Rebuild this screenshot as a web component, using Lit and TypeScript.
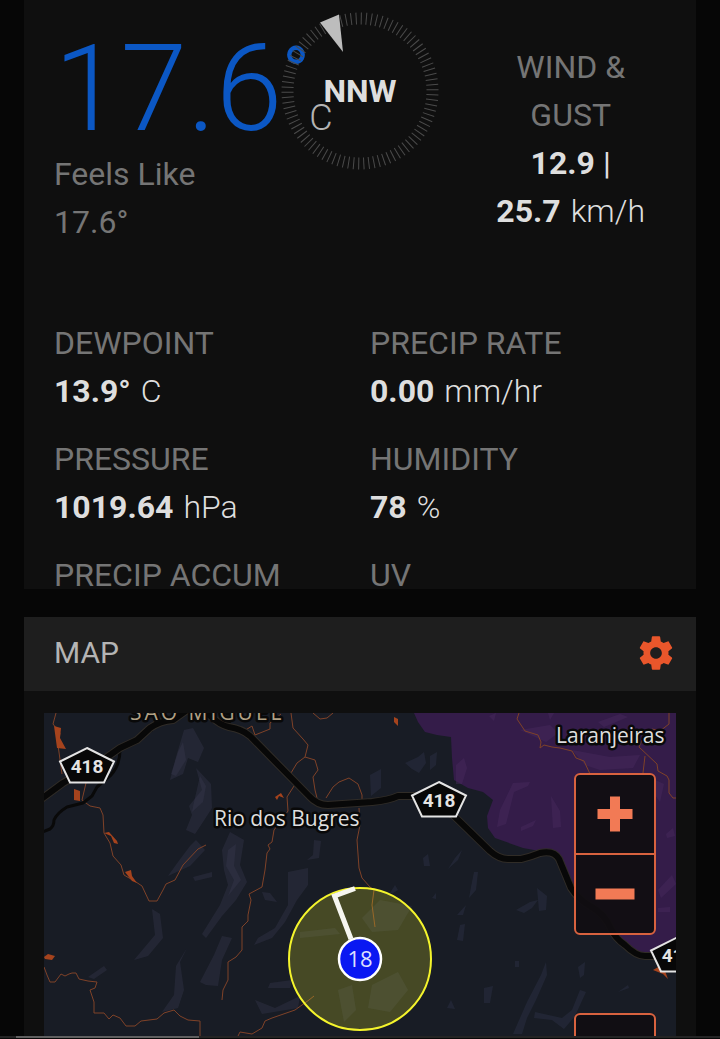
import { LitElement, html, svg, css } from "lit";
import { customElement, property } from "lit/decorators.js";

interface Reading {
  label: string;
  value?: string;
  unit?: string;
}

const READINGS: Reading[] = [
  { label: "DEWPOINT", value: "13.9°", unit: "C" },
  { label: "PRECIP RATE", value: "0.00", unit: "mm/hr" },
  { label: "PRESSURE", value: "1019.64", unit: "hPa" },
  { label: "HUMIDITY", value: "78", unit: "%" },
  { label: "PRECIP ACCUM" },
  { label: "UV" },
];

@customElement("wind-compass")
class WindCompass extends LitElement {
  @property() direction = "";

  static styles = css`
    :host {
      display: grid;
      place-items: center;
      align-content: start;
    }
    .dial,
    .direction {
      grid-area: 1 / 1;
    }
    .dial {
      display: block;
      width: 160px;
      height: 160px;
    }
    .direction {
      font-size: 32px;
      line-height: 48px;
      font-weight: 700;
      color: #dedede;
    }
  `;

  render() {
    const ticks = Array.from({ length: 90 }, (_, i) => i * 4 + 1);
    return html`
      <svg class="dial" viewBox="0 0 160 160" aria-hidden="true">
        ${ticks.map(
          (a) => svg`<line x1="80" y1="1.5" x2="80" y2="13.5" stroke="#4b4b4b" stroke-width="1" transform="rotate(${a} 80 80)"/>`
        )}
        <path d="M40 11.500L59 3.500L63 41Z" fill="#bdbdbd" stroke="#0f0f0f" stroke-width="1" paint-order="stroke" />
      </svg>
      <span class="direction">${this.direction}</span>
    `;
  }
}

@customElement("current-conditions")
class CurrentConditions extends LitElement {
  static styles = css`
    :host {
      display: block;
      background: #0f0f0f;
      padding: 0 20px;
      overflow: hidden;
      font-size: 32px;
      line-height: 48px;
    }
    .summary {
      display: grid;
      grid-template-columns: repeat(3, minmax(0, 1fr));
      height: 319px;
    }
    .temp {
      padding: 26px 10px 0;
      color: #757575;
    }
    .main {
      display: flex;
      align-items: baseline;
      white-space: nowrap;
      height: 124px;
      line-height: 126px;
      font-size: 120px;
      font-weight: 300;
      color: #0b57c4;
    }
    .degree {
      font-size: 72px;
      font-weight: 400;
      align-self: flex-start;
      line-height: 96px;
    }
    .scale {
      font-size: 36px;
      color: #b4b4b4;
    }
    .feels {
      width: 150px;
    }
    .compass {
      padding-top: 11px;
    }
    .wind {
      padding: 43px 20px 0;
      text-align: center;
    }
    .label {
      color: #757575;
    }
    .value {
      color: #dedede;
    }
    .unit {
      margin-left: 2px;
      font-weight: 300;
    }
    .together {
      white-space: nowrap;
    }
    .readings {
      display: grid;
      grid-template-columns: repeat(2, minmax(0, 1fr));
      grid-template-rows: 96px 96px 38px;
      row-gap: 20px;
      margin: 0;
    }
    .reading {
      padding: 0 10px;
    }
    dd {
      margin: 0;
    }
  `;

  render() {
    return html`
      <div class="summary">
        <div class="temp">
          <div class="main">17.6<span class="degree">°</span><span class="scale">C</span></div>
          <div class="feels">Feels Like 17.6°</div>
        </div>
        <wind-compass class="compass" direction="NNW"></wind-compass>
        <div class="wind">
          <div class="label">WIND &amp; GUST</div>
          <div class="value">
            <strong>12.9</strong> |
            <span class="together"><strong>25.7</strong> <span class="unit">km/h</span></span>
          </div>
        </div>
      </div>
      <dl class="readings">
        ${READINGS.map(
          (r) => html`<div class="reading">
            <dt class="label">${r.label}</dt>
            ${r.value ? html`<dd class="value"><strong>${r.value}</strong> <span class="unit">${r.unit}</span></dd>` : null}
          </div>`
        )}
      </dl>
    `;
  }
}

const HIGHWAY = [
  "M40 800L63 783L103 760L120 748L137 740L150 728Q160 721 173 720L190 708",
  "M200 708L213 718Q220 725 229 727Q242 729 250 736L309 796Q317 805 328 805L372 802Q390 800 398 796L415 796L453 815L490 851Q499 859 508 859L521 859Q530 857 540 853Q554 850 559 859L571 888Q578 899 590 906Q605 914 611 929Q615 938 625 945Q636 956 645 956L676 956",
];

const SIDE_ROADS = [
  "M40 833L50 829Q54 826 54 820Q57 813 67 807L83 803L92 796L97 787L111 775Q120 765 120 750L136 743L143 735L152 730",
  "M222 713L230 724",
];

const TRAILS = [
  "M56 713L53 724L60 733L58 745L62 774",
  "M86 783L82 800L90 806L100 808L103 815L104 833L110 843L113 856L121 865L124 875L136 882L142 886L149 901L157 901L163 890L166 884L175 880L183 865L198 849L206 845",
  "M244 731L252 726L255 735L270 729L270 723L281 714M291 713L293 728L303 739L308 745L305 757L297 763L291 773M305 757L315 760L318 770L313 777L315 790L317 798",
  "M313 713L320 719L327 718L333 713M326 798L333 787L339 782L349 778L358 784L362 795L362 800M294 786L287 797L288 811L280 822L274 830L272 842L268 845L270 849L267 853L265 870L262 887L249 894L251 900L248 915L248 921L242 927L242 950L236 957L228 962L228 980L223 990L222 1000",
  "M359 808L360 825L357 840L359 868L362 878L370 887L374 890L372 905L375 927",
  "M44 967L47 975L50 982L55 982L61 974L65 976L69 974L72 973L76 973L79 979L88 981L97 982L95 988L90 990L94 1002L94 1013L104 1013L109 1019L113 1015L120 1018L126 1026L135 1026L141 1021L157 1019L164 1013L174 1010L180 1016L188 1020L200 1021L200 1039",
  "M238 1036L240 1032L252 1034L262 1028L265 1021L272 1018L295 1010L309 1000L314 996",
  "M519 713L517 719L525 731L538 735L541 742L540 748L544 745L552 747L560 748L572 751L576 758L584 761L590 774M669 713L669 724L660 731L652 729L642 740L639 747L657 764L658 771L667 776L669 780L669 793L673 798L676 798M645 756L643 773",
];

const BUILT_UP = [
  "M54 726L61 728L60 738L66 749L57 748Z",
  "M74 789L80 791L80 801L74 800Z",
  "M104 833L109 832L117 841L118 844L114 843L111 836Z",
  "M125 872L131 870L132 876L137 883L132 881Z",
  "M44 957L48 954L55 956L52 960L45 959Z",
  "M275 797L281 793L284 798L279 796L277 800Z",
  "M394 717L398 719L398 726L394 722Z",
  "M653 970L660 966L665 971L668 979L663 974Z",
];

const RIDGES = [
  "M184 730L193 728L204 748L198 762L188 758L183 774L170 780L176 757Z",
  "M178 752L183 742L186 760L176 776L171 774Z",
  "M196 768L211 784L212 808L203 822L195 834L186 830L192 815L189 806L202 790Z",
  "M200 776L206 786L203 802L192 812L194 802Z",
  "M178 862L190 846L196 840L205 850L190 866L168 876Z",
  "M222 850L230 832L244 840L240 865L247 882L236 900L222 916L206 938L202 934L220 905L228 885L224 870Z",
  "M228 850L236 844L234 866L241 880L228 896L234 880L226 866Z",
  "M222 936L232 938L222 960L218 986L206 985L200 982L214 955Z",
  "M152 909L160 914L163 938L148 956L134 960L155 935Z",
  "M187 948L180 962L184 990L178 1008L162 1012L174 995L176 966Z",
  "M288 872L308 868L308 885L297 900L285 922L272 938L254 945L258 938L275 928L288 905Z",
  "M262 892L270 893L277 902L265 900Z",
  "M193 877L212 872L212 877L195 881Z",
  "M255 1000L275 1008L300 996L298 1008L262 1014Z",
  "M270 983L292 980L290 988L268 988Z",
  "M314 840L321 841L319 858L307 860L313 855Z",
  "M88 977L104 966L107 970L94 979Z",
];

const FACETS = [
  "M405 763L418 757L424 752L426 763L419 773L412 769Z",
  "M370 775L381 769L381 788L371 796Z",
  "M430 756L437 752L436 765L430 770Z",
  "M423 858L428 854L430 866L424 866Z",
  "M455 858L462 850L458 860L448 869Z",
  "M474 872L478 872L476 890L469 898L471 887Z",
  "M457 915L466 905L463 915Z",
  "M460 925L465 924L463 941L457 940Z",
  "M516 910L530 902L538 900L532 908L524 913Z",
  "M537 888L547 896L546 910L539 911Z",
  "M546 962L547 975L536 1000L527 1018L522 1034L513 1034L527 1002L541 975Z",
  "M535 1012L562 1018L572 1010L580 990L586 992L575 1016L564 1029L552 1020L534 1018Z",
  "M484 988L493 986L490 1003L484 1003Z",
  "M515 961L519 961L519 967L515 967Z",
  "M578 967L585 962L584 975L580 978Z",
  "M447 1008L451 1000L455 1009Z",
  "M390 893L395 885L398 890L393 893Z",
  "M432 898L436 893L436 899Z",
  "M618 992L628 985L629 988Z",
  "M362 918L380 900L412 906L398 930L372 932Z",
  "M300 932L335 928L340 934L300 938Z",
  "M338 990L352 985L356 1010L344 1022Z",
  "M372 985L398 972L408 990L390 1012L368 1008Z",
];

const PURPLE_FACETS = [
  "M456 765L464 758L467 768L462 784L456 784Z",
  "M500 810L513 783L530 782L528 786L514 792L506 824L497 827Z",
  "M521 827L536 820L533 826L521 831Z",
  "M551 796L560 811L561 827L553 828Z",
  "M520 730L550 725L558 733L546 742Z",
  "M572 750L610 757L640 755L633 768L600 770L585 765Z",
  "M655 780L664 784L660 802L655 795Z",
  "M489 716L496 713L494 721Z",
  "M548 713L554 713L550 720Z",
  "M598 722L620 714L628 717L604 727Z",
  "M666 834L673 828L675 836L667 838Z",
  "M658 890L672 875L676 884L661 898Z",
  "M658 908L670 907L670 912L658 912Z",
];

@customElement("station-map")
class StationMap extends LitElement {
  static styles = css`
    :host {
      display: block;
      position: relative;
      overflow: hidden;
      background: #181c25;
    }
    .canvas {
      display: block;
      width: 100%;
      height: 100%;
    }
    .outline {
      fill: none;
      stroke: #302c27;
      stroke-width: 8px;
      stroke-linejoin: round;
    }
    .highway {
      fill: none;
      stroke: #080808;
      stroke-width: 6px;
      stroke-linejoin: round;
    }
    .side {
      fill: none;
      stroke: #090909;
      stroke-width: 3px;
      stroke-linejoin: round;
    }
    .trail {
      fill: none;
      stroke: #7f4228;
      stroke-width: 1px;
    }
    .built {
      fill: #a5431d;
    }
    .ridge {
      fill: #3a3b52;
      opacity: 0.34;
    }
    .facet {
      fill: #30354a;
      opacity: 0.4;
    }
    .purple {
      fill: #341c49;
    }
    .purple-facet {
      fill: #4a2d62;
      opacity: 0.4;
    }
    .place {
      font-family: "Open Sans", "Noto Sans", sans-serif;
      font-size: 21px;
      font-weight: 500;
      fill: #dedede;
      stroke: #090909;
      stroke-width: 5px;
      stroke-linejoin: round;
      paint-order: stroke;
    }
    .city {
      fill: #b0a084;
      font-weight: 400;
      letter-spacing: 3px;
    }
    .shield {
      fill: #070707;
      stroke: #e4e4e4;
      stroke-width: 2px;
    }
    .route {
      font-family: Roboto, sans-serif;
      font-size: 19px;
      font-weight: 700;
      fill: #e4e4e4;
      text-anchor: middle;
    }
    .station {
      font-family: "Open Sans", "Noto Sans", sans-serif;
      font-size: 22px;
      fill: #dde0ff;
      text-anchor: middle;
    }
    .controls {
      position: absolute;
      top: 60px;
      right: 20px;
      display: flex;
      flex-direction: column;
      gap: 78px;
    }
    .group {
      display: flex;
      flex-direction: column;
      width: 78px;
      border: 2px solid #d8623f;
      border-radius: 6px;
      background: rgba(17, 14, 18, 0.95);
    }
    .control {
      display: grid;
      place-items: center;
      height: 78px;
      padding: 0;
      border: 0;
      background: none;
      color: #f27a55;
    }
    .control + .control {
      border-top: 2px solid #d8623f;
      height: 80px;
    }
    .glyph {
      display: block;
      width: 40px;
      height: 40px;
    }
  `;

  private shield(x: number, y: number) {
    return svg`<g transform="translate(${x} ${y})">
      <path class="shield" d="M0 -18L27 -4.500L17 16.500L-17 16.500L-27 -4.500Z"/>
      <text class="route" x="0" y="7">418</text>
    </g>`;
  }

  render() {
    return html`
      <svg class="canvas" viewBox="44 713 632 326" preserveAspectRatio="xMidYMin slice" role="img" aria-label="Station map">
        ${RIDGES.map((d) => svg`<path class="ridge" d=${d}/>`)}
        ${FACETS.map((d) => svg`<path class="facet" d=${d}/>`)}
        <path class="purple" d="M414 713L418 722L425 732L437 735L451 737L452 758L454 780L468 788L483 792L493 800L487 816L488 828L495 838L523 848L545 852L558 857L573 892L603 913L617 937L640 955L676 956L676 713Z" />
        ${PURPLE_FACETS.map((d) => svg`<path class="purple-facet" d=${d}/>`)}
        ${TRAILS.map((d) => svg`<path class="trail" d=${d}/>`)}
        ${BUILT_UP.map((d) => svg`<path class="built" d=${d}/>`)}
        ${SIDE_ROADS.map((d) => svg`<path class="side" d=${d}/>`)}
        ${HIGHWAY.map((d) => svg`<path class="outline" d=${d}/>`)}
        ${HIGHWAY.map((d) => svg`<path class="highway" d=${d}/>`)}
        <text class="place city" x="130" y="720">SÃO MIGUEL</text>
        <text class="place" x="214" y="826">Rio dos Bugres</text>
        <text class="place" x="556" y="743">Laranjeiras</text>
        ${this.shield(87, 766)} ${this.shield(439, 800)} ${this.shield(678, 955)}
        <circle cx="360" cy="959" r="71" fill="#ffff28" fill-opacity=".2" stroke="#f4f42c" stroke-width="2" />
        <path d="M351 939L334.500 896L355 888.500" fill="none" stroke="#f6f6f0" stroke-width="5" stroke-linejoin="miter" />
        <circle cx="360" cy="959" r="21" fill="#0a18f2" stroke="#fff" stroke-width="2.500" />
        <text class="station" x="360" y="967">18</text>
      </svg>
      <div class="controls">
        <div class="group">
          <button class="control" aria-label="Zoom in">
            <svg class="glyph" viewBox="0 0 40 40"><path d="M15 2.500h10v12.500h12.500v10H25v12.500H15V25H2.500V15H15Z" fill="currentColor" /></svg>
          </button>
          <button class="control" aria-label="Zoom out">
            <svg class="glyph" viewBox="0 0 40 40"><path d="M.5 14.500h39v11H.5Z" fill="currentColor" /></svg>
          </button>
        </div>
        <div class="group"><button class="control" aria-label="Locate station"></button></div>
      </div>
    `;
  }
}

@customElement("app-root")
class AppRoot extends LitElement {
  static styles = css`
    :host {
      display: flex;
      flex-direction: column;
      gap: 28px;
      box-sizing: border-box;
      position: relative;
      height: 100vh;
      padding: 0 24px;
      overflow: hidden;
      background: #060606;
      font-family: Roboto, "Liberation Sans", sans-serif;
    }
    .conditions {
      flex: none;
    }
    .card {
      flex: 1;
      min-height: 0;
      display: flex;
      flex-direction: column;
      background: #0f0f0f;
    }
    .header {
      display: flex;
      align-items: center;
      justify-content: space-between;
      box-sizing: border-box;
      height: 74px;
      flex: none;
      padding: 0 20px 2px 30px;
      background: #1e1e1e;
    }
    .title {
      margin: 0;
      font-size: 30px;
      line-height: 48px;
      font-weight: 400;
      color: #b4b4b4;
    }
    .settings {
      padding: 0;
      border: 0;
      background: none;
      color: #e9562b;
    }
    .gear {
      display: block;
      width: 40px;
      height: 40px;
    }
    .map {
      flex: 1;
      min-height: 0;
      margin: 22px 20px 0;
    }
    .track {
      position: absolute;
      left: 0;
      right: 0;
      bottom: 0;
      box-sizing: border-box;
      height: 3px;
      padding-left: 16px;
      background: #242424;
      border-bottom: 1px solid #080808;
    }
    .thumb {
      width: 26%;
      height: 2px;
      background: #606060;
    }
  `;

  render() {
    return html`
      <current-conditions class="conditions"></current-conditions>
      <section class="card">
        <header class="header">
          <h2 class="title">MAP</h2>
          <button class="settings" aria-label="Map settings">
            <svg class="gear" viewBox="0 0 24 24">
              <path
                fill="currentColor"
                d="M19.430 12.980c.04-.32.07-.64.07-.98s-.03-.66-.07-.98l2.110-1.650c.19-.15.24-.42.12-.64l-2-3.460c-.12-.22-.39-.3-.61-.22l-2.490 1c-.52-.4-1.080-.73-1.690-.98l-.38-2.650C14.460 2.180 14.250 2 14 2h-4c-.25 0-.46.18-.49.42l-.38 2.650c-.61.25-1.170.59-1.690.98l-2.490-1c-.23-.09-.49 0-.61.22l-2 3.460c-.13.22-.07.49.12.64l2.110 1.650c-.04.32-.07.65-.07.98s.03.66.07.98l-2.110 1.650c-.19.15-.24.42-.12.64l2 3.460c.12.22.39.3.61.22l2.490-1c.52.4 1.080.73 1.690.98l.38 2.650c.03.24.24.42.49.42h4c.25 0 .46-.18.49-.42l.38-2.650c.61-.25 1.170-.59 1.690-.98l2.490 1c.23.09.49 0 .61-.22l2-3.460c.12-.22.07-.49-.12-.64l-2.110-1.650zM12 15.500c-1.930 0-3.500-1.570-3.500-3.500s1.570-3.500 3.500-3.500 3.500 1.570 3.500 3.500-1.570 3.500-3.500 3.500z"
              />
            </svg>
          </button>
        </header>
        <station-map class="map"></station-map>
      </section>
      <div class="track"><div class="thumb"></div></div>
    `;
  }
}
